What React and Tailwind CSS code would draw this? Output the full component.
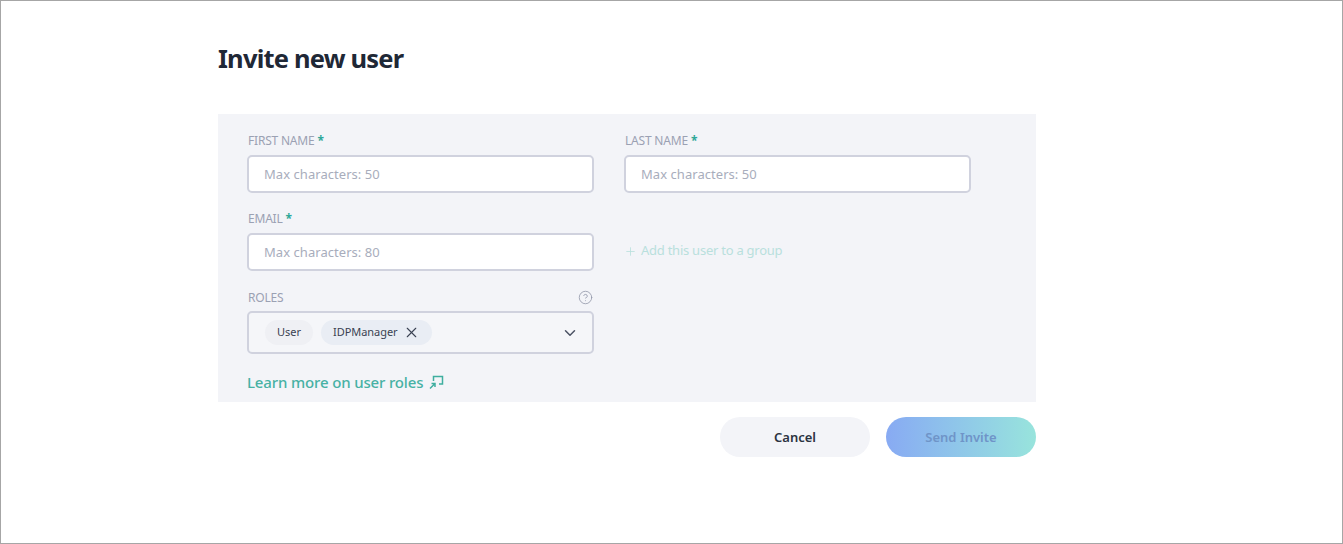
import React from 'react';
import { ChevronDown, X, Plus, CircleHelp } from 'lucide-react';

const Label = ({ text, required }) => (
  <div className="h-[20px] pt-[1px] pl-[1px] flex items-center text-[12px] leading-[20px] text-[#9ba1b3] uppercase tracking-[-0.2px]">
    {text}
    {required && <span className="ml-[3px] text-[#2fa898] font-bold">*</span>}
  </div>
);

const TextField = ({ label, hint }) => (
  <div className="w-[347px]">
    <Label text={label} required />
    <input
      placeholder={hint}
      className="mt-[5px] block w-full h-[38px] bg-white border-2 border-[#d0d2de] rounded-[5px] px-[15px] text-[13px] tracking-[0.05px] outline-none placeholder:text-[#a8adbc]"
    />
  </div>
);

const LinkIcon = () => (
  <svg width="16" height="16" viewBox="0 0 16 16" fill="none" stroke="#3fae9f" strokeWidth="1.5">
    <path d="M5.5 7V2.5H14.5V10H11" />
    <path d="M2 14.5L6.5 10M3.5 9.5H7V13" />
  </svg>
);

export default function App() {
  return (
    <div className="h-[544px] border border-[#a6a6a6] bg-white pl-[217px] font-['Noto_Sans',sans-serif]">
      <h1 className="pt-[39px] h-[113px] text-[25.5px] leading-[36px] font-bold text-[#1f2836] tracking-[-0.8px]">
        Invite new user
      </h1>

      <div className="w-[818px] h-[288px] bg-[#f3f4f8] pl-[29px] pt-[16px]">
        <div className="flex gap-[30px]">
          <TextField label="First name" hint="Max characters: 50" />
          <TextField label="Last name" hint="Max characters: 50" />
        </div>

        <div className="flex gap-[30px] mt-[15px]">
          <TextField label="Email" hint="Max characters: 80" />
          <div className="h-[63px] pt-[22px] flex items-center gap-[4px] text-[13px] text-[#b9e0dd] tracking-[-0.25px]">
            <Plus size={13} strokeWidth={1.5} className="mt-[1px]" />
            <span>Add this user to a group</span>
          </div>
        </div>

        <div className="w-[347px] mt-[16px]">
          <div className="flex items-center justify-between">
            <Label text="Roles" />
            <CircleHelp size={15} strokeWidth={1.25} className="text-[#8f95a6] mr-[1px]" />
          </div>
          <div className="mt-[4px] h-[43px] bg-[#f5f6f9] border-2 border-[#d0d2de] rounded-[5px] pl-[16px] pr-[13px] flex items-center">
            <span className="h-[25px] px-[12px] rounded-full bg-[#eff0f4] flex items-center text-[11px] text-[#3a4252]">User</span>
            <span className="ml-[8px] h-[25px] pl-[12px] pr-[12px] rounded-full bg-[#e9edf4] flex items-center text-[11px] text-[#3a4252] tracking-[-0.05px]">
              IDPManager
              <X size={17} strokeWidth={1.5} className="ml-[5px]" />
            </span>
            <ChevronDown size={18} strokeWidth={2} className="ml-auto text-[#4c5364]" />
          </div>
          <div className="mt-[18px] flex items-center gap-[5px] text-[15px] leading-[20px] font-medium text-[#47b1a4] tracking-[-0.15px]">
            Learn more on user roles
            <LinkIcon />
          </div>
        </div>
      </div>

      <div className="w-[818px] mt-[15px] flex justify-end gap-[16px]">
        <button className="w-[150px] h-[40px] pt-[1px] rounded-full bg-[#f3f4f8] text-[13px] font-semibold text-[#2b3341]">
          Cancel
        </button>
        <button className="w-[150px] h-[40px] pt-[1px] rounded-full bg-gradient-to-r from-[#88aaf3] to-[#98e4dc] text-[13px] font-semibold text-[#6f94c8]">
          Send Invite
        </button>
      </div>
    </div>
  );
}
